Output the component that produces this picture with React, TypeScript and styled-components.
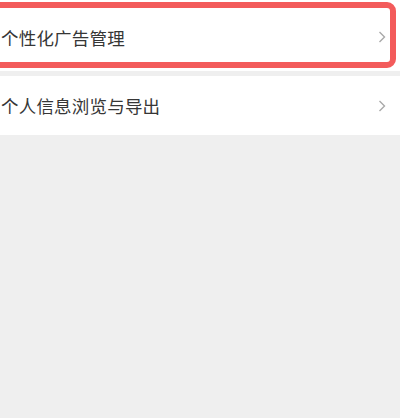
import React from 'react'
import styled, { createGlobalStyle } from 'styled-components'

const GlobalStyle = createGlobalStyle`
  html, body {
    margin: 0;
    padding: 0;
    background: #efefef;
  }
  body {
    font-family: "Noto Sans CJK SC", "Noto Sans", sans-serif;
    overflow: hidden;
  }
`

const Page = styled.div`
  width: 400px;
  height: 418px;
  background: #efefef;
  display: flex;
  flex-direction: column;
  gap: 5px;
`

const Row = styled.div<{ $height: number; $shift: number }>`
  position: relative;
  height: ${p => p.$height}px;
  background: #ffffff;
  display: flex;
  align-items: center;
  justify-content: space-between;
  padding: ${p => p.$shift}px 14px 0 1px;
  box-sizing: border-box;
`

const Label = styled.span`
  font-size: 17.5px;
  color: #363636;
  letter-spacing: 0.2px;
`

const Highlight = styled.div`
  position: absolute;
  left: -12px;
  top: 2px;
  right: 4px;
  bottom: 3px;
  border: 6px solid #f35b5b;
  border-radius: 9px;
  pointer-events: none;
`

const Chevron = () => (
  <svg width="8" height="12" viewBox="0 0 8 12">
    <polyline points="1.5,1 6.5,6 1.5,11" fill="none" stroke="#a9a9a9" strokeWidth="1.4" />
  </svg>
)

const items = [
  { label: '个性化广告管理', height: 71, shift: 3, marked: true },
  { label: '个人信息浏览与导出', height: 59, shift: 0, marked: false },
]

export default function App() {
  return (
    <>
      <GlobalStyle />
      <Page>
        {items.map(item => (
          <Row key={item.label} $height={item.height} $shift={item.shift}>
            <Label>{item.label}</Label>
            <Chevron />
            {item.marked && <Highlight />}
          </Row>
        ))}
      </Page>
    </>
  )
}
